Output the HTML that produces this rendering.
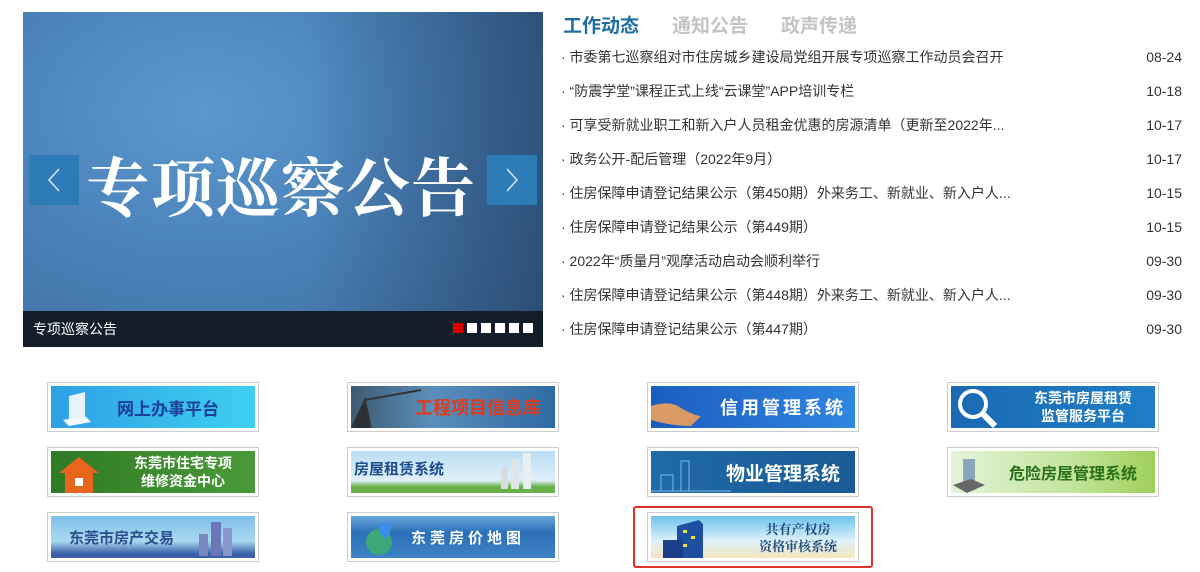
<!DOCTYPE html>
<html><head><meta charset="utf-8"><style>
*{margin:0;padding:0;box-sizing:border-box}
body{width:1200px;height:572px;background:#fff;font-family:"Liberation Sans","Noto Sans CJK SC",sans-serif;position:relative;overflow:hidden}
.slide{position:absolute;left:23px;top:12px;width:520px;height:335px;background:linear-gradient(90deg,rgba(0,0,0,0) 0%,rgba(0,0,0,0) 55%,rgba(20,40,70,.45) 100%),radial-gradient(ellipse at 35% 30%,#5b98cf 0%,#4a82b8 45%,#3d6a9a 100%)}
.big{position:absolute;left:63px;top:126px;font-family:"Noto Serif CJK SC",serif;font-size:64px;font-weight:700;color:#fff;letter-spacing:1px;white-space:nowrap}
.arr{position:absolute;top:143px;width:50px;height:50px;background:#2d7bb7}
.cap{position:absolute;left:0;bottom:0;width:520px;height:36px;background:#141e2b;color:#fff;font-size:14px;line-height:36px;padding-left:10px}
.dots{position:absolute;right:10px;top:12px;display:flex;gap:4px}
.dots i{width:10px;height:10px;background:#fff;display:block}
.tabs{position:absolute;left:563px;top:11px;font-size:19px;font-weight:700;color:#c4c4c4}
.tabs span{margin-right:33px}
.news{position:absolute;left:561px;top:40px;width:621px}
.news div{height:34px;line-height:34px;font-size:14px;color:#333;display:flex;justify-content:space-between}
.bn{position:absolute;width:212px;height:50px;border:1px solid #ccc;padding:3px}
.bn div{width:100%;height:100%;position:relative;overflow:hidden;font-weight:700;display:flex;align-items:center;justify-content:center}
.bn svg{position:absolute;left:0;top:0}
.red{position:absolute;left:633px;top:506px;width:240px;height:62px;border:2px solid #e0302a;border-radius:3px}
</style></head><body>
<div class="slide">
<div class="big">专项巡察公告</div>
<div class="arr" style="left:6px"><svg width="50" height="50"><path d="M30 14 L20 25 L30 36" stroke="#d5e6f4" stroke-width="1.5" fill="none"/></svg></div>
<div class="arr" style="left:464px"><svg width="50" height="50"><path d="M20 14 L30 25 L20 36" stroke="#d5e6f4" stroke-width="1.5" fill="none"/></svg></div>
<div class="cap">专项巡察公告<div class="dots"><i style="background:#d00"></i><i></i><i></i><i></i><i></i><i></i></div></div>
</div>
<div class="tabs"><span style="color:#1f6fa5">工作动态</span><span>通知公告</span><span>政声传递</span></div>
<div class="news">
<div><span>· 市委第七巡察组对市住房城乡建设局党组开展专项巡察工作动员会召开</span><span>08-24</span></div>
<div><span>· “防震学堂”课程正式上线“云课堂”APP培训专栏</span><span>10-18</span></div>
<div><span>· 可享受新就业职工和新入户人员租金优惠的房源清单（更新至2022年...</span><span>10-17</span></div>
<div><span>· 政务公开-配后管理（2022年9月）</span><span>10-17</span></div>
<div><span>· 住房保障申请登记结果公示（第450期）外来务工、新就业、新入户人...</span><span>10-15</span></div>
<div><span>· 住房保障申请登记结果公示（第449期）</span><span>10-15</span></div>
<div><span>· 2022年“质量月”观摩活动启动会顺利举行</span><span>09-30</span></div>
<div><span>· 住房保障申请登记结果公示（第448期）外来务工、新就业、新入户人...</span><span>09-30</span></div>
<div><span>· 住房保障申请登记结果公示（第447期）</span><span>09-30</span></div>
</div>

<div class="bn" style="left:47px;top:382px"><div style="background:linear-gradient(90deg,#2ea0e6,#3ed0f0);color:#1c3f9a;font-size:17px;padding-left:30px"><svg width="60" height="44"><path d="M18 10 L34 6 L34 30 L18 34Z" fill="#e8f2fb"/><path d="M12 34 L34 30 L40 36 L18 40Z" fill="#f4f8fc"/></svg>网上办事平台</div></div>
<div class="bn" style="left:347px;top:382px"><div style="background:linear-gradient(90deg,#3e5a70,#5a8fbb 40%,#2f6aa3);color:#e03a1a;font-size:18px;padding-left:50px"><svg width="80" height="44"><path d="M0 44 L14 14 L20 44Z M14 14 L70 4" stroke="#333" stroke-width="2" fill="#2a3038"/></svg>工程项目信息库</div></div>
<div class="bn" style="left:647px;top:382px"><div style="background:linear-gradient(90deg,#1c5cc0,#2f86e0);color:#fff;font-size:18px;padding-left:60px;letter-spacing:3px"><svg width="60" height="44"><path d="M0 20 Q20 14 30 22 Q44 30 50 30 L40 40 Q20 40 0 34Z" fill="#d99a66"/></svg>信用管理系统</div></div>
<div class="bn" style="left:947px;top:382px"><div style="background:linear-gradient(90deg,#1a6ab3,#1f7ec6);color:#fff;font-size:14px;line-height:18px;padding-left:60px;text-align:center"><svg width="60" height="44"><circle cx="22" cy="18" r="13" stroke="#fff" stroke-width="4" fill="none"/><path d="M31 27 L44 40" stroke="#fff" stroke-width="6"/></svg>东莞市房屋租赁<br>监管服务平台</div></div>

<div class="bn" style="left:47px;top:447px"><div style="background:linear-gradient(90deg,#2f7a25,#4a9a3a);color:#fff;font-size:14px;line-height:18px;padding-left:60px;text-align:center"><svg width="60" height="44"><path d="M8 22 L28 6 L48 22 L42 22 L42 42 L14 42 L14 22Z" fill="#e8651b"/><rect x="24" y="27" width="8" height="8" fill="#fff"/></svg>东莞市住宅专项<br>维修资金中心</div></div>
<div class="bn" style="left:347px;top:447px"><div style="background:linear-gradient(180deg,#b9ddf2,#e0f0fa 70%,#6ab04a 85%);color:#1a4c8c;font-size:15px;justify-content:flex-start;padding-left:3px;padding-bottom:8px"><svg width="204" height="44"><rect x="160" y="8" width="8" height="30" fill="#dfe6ea"/><rect x="172" y="2" width="8" height="36" fill="#e8eef2"/><rect x="150" y="16" width="7" height="22" fill="#d5dde2"/></svg>房屋租赁系统</div></div>
<div class="bn" style="left:647px;top:447px"><div style="background:linear-gradient(90deg,#1f6aa8,#1a5b95);color:#fff;font-size:19px;padding-left:60px"><svg width="90" height="44"><path d="M0 40 L80 40 M10 40 L10 24 L22 24 L22 40 M30 40 L30 10 L38 10 L38 40" stroke="#7fb8e0" stroke-width="1" fill="none"/></svg>物业管理系统</div></div>
<div class="bn" style="left:947px;top:447px"><div style="background:linear-gradient(90deg,#e4f3d8,#c2e49a 60%,#9fd05a);color:#2a6f1a;font-size:16px;padding-left:40px"><svg width="50" height="44"><rect x="12" y="8" width="12" height="24" fill="#8aa6b8"/><path d="M2 34 L20 28 L34 34 L16 42Z" fill="#666"/></svg>危险房屋管理系统</div></div>

<div class="bn" style="left:47px;top:512px"><div style="background:linear-gradient(180deg,#7ec0e8,#a9d8f0 60%,#3a5fa8 90%);color:#2a4f8c;font-size:15px;justify-content:flex-start;padding-left:18px"><svg width="204" height="44"><rect x="160" y="6" width="10" height="34" fill="#6a78b8"/><rect x="172" y="12" width="9" height="28" fill="#8a96cc"/><rect x="148" y="18" width="9" height="22" fill="#7a88c0"/></svg><span style="position:relative">东莞市房产交易</span></div></div>
<div class="bn" style="left:347px;top:512px"><div style="background:linear-gradient(180deg,#6aa6d8,#2a6fb8 40%,#3f83c6);color:#fff;font-size:15px;padding-left:30px;letter-spacing:4px"><svg width="60" height="44"><circle cx="28" cy="26" r="13" fill="#3ba87a"/><path d="M34 6 a6 6 0 0 1 6 6 c0 5 -6 12 -6 12 s-6 -7 -6 -12 a6 6 0 0 1 6 -6z" fill="#3a8ee8"/></svg>东莞房价地图</div></div>
<div class="bn" style="left:647px;top:512px"><div style="background:linear-gradient(180deg,#6cc4ec,#dff1fb 60%,#f5e6bc);color:#1f4a7c;font-size:13px;line-height:17px;padding-left:90px;text-align:center;font-family:'Noto Serif CJK SC',serif"><svg width="80" height="44"><path d="M26 10 L48 4 L52 8 L52 44 L26 44Z" fill="#1f4fa0"/><rect x="12" y="24" width="20" height="20" fill="#1a3f88"/><rect x="32" y="14" width="4" height="3" fill="#e8e820"/><rect x="40" y="20" width="4" height="3" fill="#e8e820"/><rect x="32" y="28" width="4" height="3" fill="#e8e820"/></svg>共有产权房<br>资格审核系统</div></div>
<div class="red"></div>
</body></html>
